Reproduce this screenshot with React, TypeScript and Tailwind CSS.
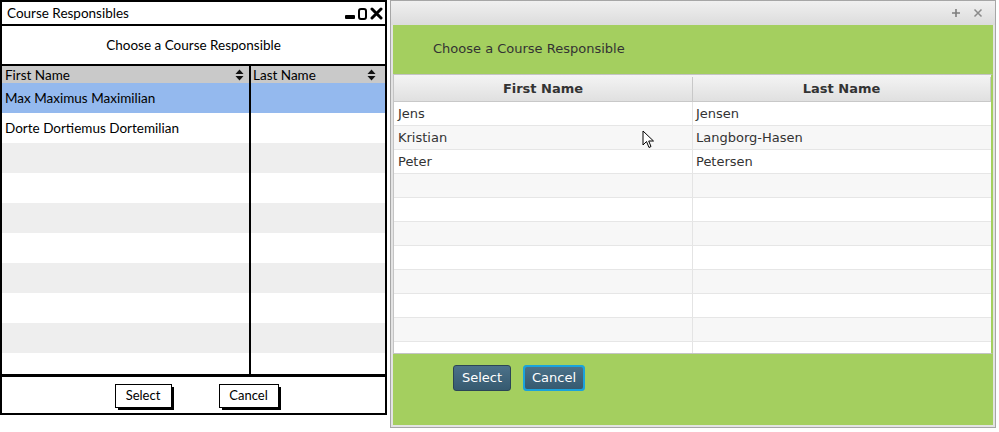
import React from "react";

const leftRows = [
  { a: "Max Maximus Maximilian", sel: true },
  { a: "Dorte Dortiemus Dortemilian" },
  {}, {}, {}, {}, {}, {}, {}, {},
];

const rightRows = [
  ["Jens", "Jensen"],
  ["Kristian", "Langborg-Hasen"],
  ["Peter", "Petersen"],
  ["", ""], ["", ""], ["", ""], ["", ""], ["", ""], ["", ""], ["", ""], ["", ""],
];

function SortIcon() {
  return (
    <svg width="9" height="12" viewBox="0 0 9 12">
      <path d="M4.5 0.5 L8.5 5 L0.5 5 Z" fill="#111" />
      <path d="M0.5 7 L8.5 7 L4.5 11.5 Z" fill="#111" />
    </svg>
  );
}

function SketchButton({ label, w }: { label: string; w: string }) {
  return (
    <div className={`relative ${w} h-[24px]`}>
      <div className="absolute left-[3px] top-[3px] right-[-2px] bottom-[-2px] bg-black" />
      <div className="absolute inset-0 bg-white border-[1.5px] border-black flex items-center justify-center text-[13px]">
        {label}
      </div>
    </div>
  );
}

export default function App() {
  return (
    <div className="w-[999px] h-[432px] bg-white flex items-start overflow-hidden">
      {/* Left wireframe */}
      <div className="w-[387px] h-[415px] border-2 border-black flex flex-col font-['Lato',sans-serif] text-[13.5px] text-black">
        <div className="h-[24px] border-b-2 border-black flex items-center justify-between pl-[5px] pr-[2px]">
          <span>Course Responsibles</span>
          <div className="flex items-end gap-[3px] h-[14px]">
            <div className="w-[10px] h-[4px] bg-black rounded-[1px] mb-[1px]" />
            <div className="w-[9px] h-[12px] border-[2.5px] border-black rounded-[3px]" />
            <svg width="13" height="13" viewBox="0 0 13 13">
              <path d="M2 2 L11 11 M11 2 L2 11" stroke="#000" strokeWidth="3" strokeLinecap="round" />
            </svg>
          </div>
        </div>
        <div className="h-[40px] border-b-2 border-black flex items-center justify-center">
          Choose a Course Responsible
        </div>
        <div className="h-[311px] border-b-[3px] border-black flex flex-col overflow-hidden">
          <div className="h-[17px] bg-[#c9c9c9] flex shrink-0">
            <div className="w-[249px] border-r-2 border-black flex items-center justify-between pl-[3px] pr-[5px] pt-[1px]">
              <span>First Name</span>
              <SortIcon />
            </div>
            <div className="flex-1 flex items-center justify-between pl-[2px] pr-[9px] pt-[1px]">
              <span>Last Name</span>
              <SortIcon />
            </div>
          </div>
          {leftRows.map((r, i) => (
            <div
              key={i}
              className={`h-[30px] flex shrink-0 ${
                r.sel ? "bg-[#94b9ee]" : i % 2 === 0 ? "bg-[#eeeeee]" : "bg-white"
              }`}
            >
              <div className="w-[249px] border-r-2 border-black flex items-center pl-[3px]">
                {r.a ?? ""}
              </div>
              <div className="flex-1" />
            </div>
          ))}
        </div>
        <div className="h-[36px] flex items-center justify-center gap-[47px] pl-[6px] pt-[1px]">
          <SketchButton label="Select" w="w-[57px]" />
          <SketchButton label="Cancel" w="w-[60px]" />
        </div>
      </div>

      {/* Right JavaFX window */}
      <div className="relative ml-[3px] w-[606px] h-[428px] border border-[#a6a6a6] bg-[#e3e3e3] flex flex-col font-['DejaVu_Sans',sans-serif] text-[13px] text-[#333]">
        <div className="h-[24px] bg-gradient-to-b from-[#f0f0f0] to-[#dcdcdc] flex items-center justify-end gap-[12px] pr-[12px] text-[#7d7d7d]">
          <svg width="10" height="10" viewBox="0 0 10 10">
            <path d="M5 1 V9 M1 5 H9" stroke="#7d7d7d" strokeWidth="1.6" />
          </svg>
          <svg width="10" height="10" viewBox="0 0 10 10">
            <path d="M1.5 1.5 L8.5 8.5 M8.5 1.5 L1.5 8.5" stroke="#8a8a8a" strokeWidth="1.5" />
          </svg>
        </div>
        <div className="mx-[2px] flex flex-col flex-1 mb-[2px]">
          <div className="h-[49px] bg-[#a4cf5f] flex items-center pl-[40px] pb-[2px]">
            Choose a Course Responsible
          </div>
          <div className="h-[280px] bg-white border border-[#c4c4c4] border-r-[2px] border-r-[#a4cf5f] flex flex-col overflow-hidden">
            <div className="h-[27px] shrink-0 flex bg-gradient-to-b from-[#f4f4f4] to-[#e0e0e0] border-b border-[#c8c8c8] font-bold pt-[2px]">
              <div className="w-[299px] border-r border-[#c8c8c8] flex items-center justify-center">First Name</div>
              <div className="flex-1 border-r border-[#c8c8c8] flex items-center justify-center">Last Name</div>
            </div>
            {rightRows.map((r, i) => (
              <div
                key={i}
                className={`h-[24px] shrink-0 flex border-b border-[#e6e6e6] ${
                  i % 2 === 1 ? "bg-[#f7f7f7]" : "bg-white"
                }`}
              >
                <div className="w-[299px] border-r border-[#e4e4e4] flex items-center pl-[4px]">{r[0]}</div>
                <div className="flex-1 flex items-center pl-[3px]">{r[1]}</div>
              </div>
            ))}
          </div>
          <div className="flex-1 bg-[#a4cf5f] flex items-start gap-[12px] pl-[60px] pt-[11px]">
            <div className="w-[58px] h-[26px] rounded-[3px] border border-[#2b4556] bg-gradient-to-b from-[#4b7189] to-[#365a70] text-white flex items-center justify-center">
              Select
            </div>
            <div className="w-[62px] h-[26px] rounded-[3px] border border-[#1aa3dc] p-[1px] bg-[#1aa3dc]">
              <div className="w-full h-full rounded-[2px] bg-gradient-to-b from-[#4b7189] to-[#365a70] text-white flex items-center justify-center">
                Cancel
              </div>
            </div>
          </div>
        </div>
        <svg className="absolute left-[251px] top-[129px]" width="14" height="20" viewBox="0 0 14 20">
          <path d="M1 1 L1 15 L4.5 11.5 L7 17.5 L9 16.5 L6.7 11 L11.5 11 Z" fill="#fff" stroke="#000" strokeWidth="1" strokeLinejoin="round" />
        </svg>
      </div>
    </div>
  );
}
